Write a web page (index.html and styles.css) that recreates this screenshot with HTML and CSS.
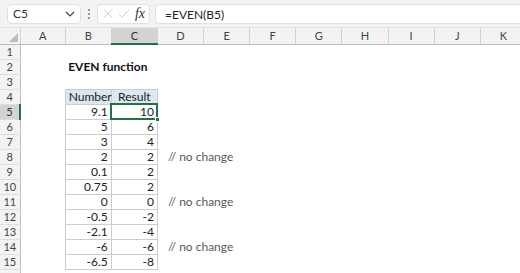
FILE: index.html
```html
<!DOCTYPE html>
<html lang="en">
<head>
  <meta charset="UTF-8">
  <title>EVEN function</title>
  <link rel="stylesheet" href="styles.css">
</head>
<body>
  <div class="toolbar">
    <div class="name-box">
      <span>C5</span>
      <svg width="10" height="6" viewBox="0 0 10 6"><path d="M1 1 L5 5 L9 1" fill="none" stroke="#444" stroke-width="1.2"/></svg>
    </div>
    <div class="dots"><i></i><i></i><i></i></div>
    <div class="fx-box">
      <svg width="13" height="13" viewBox="0 0 13 13"><path d="M1 1 L12 12 M12 1 L1 12" stroke="#c4c4c4" stroke-width="1.1"/></svg>
      <svg width="15" height="12" viewBox="0 0 15 12"><path d="M1 6 L5 10 L14 1" fill="none" stroke="#c4c4c4" stroke-width="1.1"/></svg>
      <span class="fx">fx</span>
    </div>
    <div class="formula">=EVEN(B5)</div>
  </div>

  <table class="sheet">
    <colgroup>
      <col class="c-row"><col class="c-a"><col><col><col><col><col><col><col><col><col><col>
    </colgroup>
    <tr class="heads">
      <td class="corner"></td><td>A</td><td>B</td><td class="sel">C</td><td>D</td><td>E</td><td>F</td><td>G</td><td>H</td><td>I</td><td>J</td><td>K</td>
    </tr>
    <tr><td class="rh">1</td><td></td><td></td><td></td><td></td><td></td><td></td><td></td><td></td><td></td><td></td><td></td></tr>
    <tr><td class="rh">2</td><td></td><td class="title">EVEN function</td><td></td><td></td><td></td><td></td><td></td><td></td><td></td><td></td><td></td></tr>
    <tr><td class="rh">3</td><td></td><td></td><td></td><td></td><td></td><td></td><td></td><td></td><td></td><td></td><td></td></tr>
    <tr><td class="rh">4</td><td></td><td class="t th">Number</td><td class="t th">Result</td><td></td><td></td><td></td><td></td><td></td><td></td><td></td><td></td></tr>
    <tr><td class="rh sel">5</td><td></td><td class="t">9.1</td><td class="t active">10</td><td></td><td></td><td></td><td></td><td></td><td></td><td></td><td></td></tr>
    <tr><td class="rh">6</td><td></td><td class="t">5</td><td class="t">6</td><td></td><td></td><td></td><td></td><td></td><td></td><td></td><td></td></tr>
    <tr><td class="rh">7</td><td></td><td class="t">3</td><td class="t">4</td><td></td><td></td><td></td><td></td><td></td><td></td><td></td><td></td></tr>
    <tr><td class="rh">8</td><td></td><td class="t">2</td><td class="t">2</td><td class="note">// no change</td><td></td><td></td><td></td><td></td><td></td><td></td><td></td></tr>
    <tr><td class="rh">9</td><td></td><td class="t">0.1</td><td class="t">2</td><td></td><td></td><td></td><td></td><td></td><td></td><td></td><td></td></tr>
    <tr><td class="rh">10</td><td></td><td class="t">0.75</td><td class="t">2</td><td></td><td></td><td></td><td></td><td></td><td></td><td></td><td></td></tr>
    <tr><td class="rh">11</td><td></td><td class="t">0</td><td class="t">0</td><td class="note">// no change</td><td></td><td></td><td></td><td></td><td></td><td></td><td></td></tr>
    <tr><td class="rh">12</td><td></td><td class="t">-0.5</td><td class="t">-2</td><td></td><td></td><td></td><td></td><td></td><td></td><td></td><td></td></tr>
    <tr><td class="rh">13</td><td></td><td class="t">-2.1</td><td class="t">-4</td><td></td><td></td><td></td><td></td><td></td><td></td><td></td><td></td></tr>
    <tr><td class="rh">14</td><td></td><td class="t">-6</td><td class="t">-6</td><td class="note">// no change</td><td></td><td></td><td></td><td></td><td></td><td></td><td></td></tr>
    <tr><td class="rh">15</td><td></td><td class="t">-6.5</td><td class="t">-8</td><td></td><td></td><td></td><td></td><td></td><td></td><td></td><td></td></tr>
    <tr class="last"><td class="rh"></td><td></td><td></td><td></td><td></td><td></td><td></td><td></td><td></td><td></td><td></td><td></td></tr>
  </table>
</body>
</html>
```

FILE: styles.css
```css
body {
  margin: 0;
  font-family: Lato, "Liberation Sans", sans-serif;
  font-size: 12px;
  color: #222;
  background: #fff;
  width: 520px;
  height: 273px;
  overflow: hidden;
}
.toolbar {
  display: flex;
  align-items: center;
  height: 28px;
  padding-left: 7px;
  background: #f3f3f3;
  border-bottom: 1px solid #e2e2e2;
  box-sizing: border-box;
}
.name-box {
  display: flex;
  align-items: center;
  justify-content: space-between;
  width: 74px;
  height: 20px;
  padding: 0 5px;
  box-sizing: border-box;
  background: #fff;
  border: 1px solid #e0e0e0;
  border-radius: 4px;
  color: #333;
}
.dots {
  display: flex;
  flex-direction: column;
  gap: 2px;
  margin: 0 7px;
}
.dots i {
  width: 2px;
  height: 2px;
  background: #999;
}
.fx-box {
  display: flex;
  align-items: center;
  gap: 5px;
  width: 53px;
  height: 20px;
  padding: 0 4px 0 5px;
  box-sizing: border-box;
  background: #fff;
  border: 1px solid #e0e0e0;
  border-radius: 4px;
}
.fx {
  font-family: "Liberation Serif", serif;
  font-style: italic;
  font-size: 14px;
  color: #333;
}
.formula {
  flex: 1;
  height: 20px;
  margin-left: 5px;
  padding-left: 9px;
  line-height: 19px;
  background: #fff;
  border: 1px solid #e0e0e0;
  border-right: none;
  border-radius: 4px 0 0 4px;
  box-sizing: border-box;
  color: #222;
}
.sheet {
  border-collapse: collapse;
  table-layout: fixed;
  width: 527px;
}
.sheet col { width: 46px; }
.sheet col.c-row { width: 20px; }
.sheet col.c-a { width: 45px; }
.sheet td {
  height: 15px;
  padding: 0 3px;
  line-height: 14px;
  white-space: nowrap;
  overflow: visible;
  box-sizing: border-box;
}
.heads td {
  height: 16px;
  text-align: center;
  color: #444;
  font-size: 11px;
  background: #f3f3f3;
  border-right: 1px solid #d4d4d4;
  border-bottom: 1px solid #bdbdbd;
}
.heads td.sel {
  background: #d3d3d3;
  border-bottom: 2px solid #217346;
  color: #333;
}
.corner {
  position: relative;
}
.corner::after {
  content: "";
  position: absolute;
  right: 2px;
  bottom: 2px;
  border-left: 9px solid transparent;
  border-bottom: 9px solid #bdbdbd;
}
.rh {
  text-align: center;
  color: #444;
  font-size: 11px;
  background: #f3f3f3;
  border-right: 1px solid #bdbdbd;
  border-bottom: 1px solid #dedede;
}
.rh.sel {
  background: #d3d3d3;
  border-right: 2px solid #217346;
  color: #333;
}
.title {
  font-weight: bold;
  color: #111;
}
.t {
  text-align: right;
  border: 1px solid #cdcdcd;
}
.th {
  text-align: center;
  background: #dde6f1;
  color: #222;
}
.active {
  position: relative;
  outline: 2px solid #217346;
  outline-offset: -1px;
}
.active::after {
  content: "";
  position: absolute;
  right: -3px;
  bottom: -3px;
  width: 5px;
  height: 5px;
  background: #217346;
  border: 1px solid #fff;
  box-sizing: border-box;
}
.sheet td.note {
  padding-left: 10px;
  color: #595959;
}
```
